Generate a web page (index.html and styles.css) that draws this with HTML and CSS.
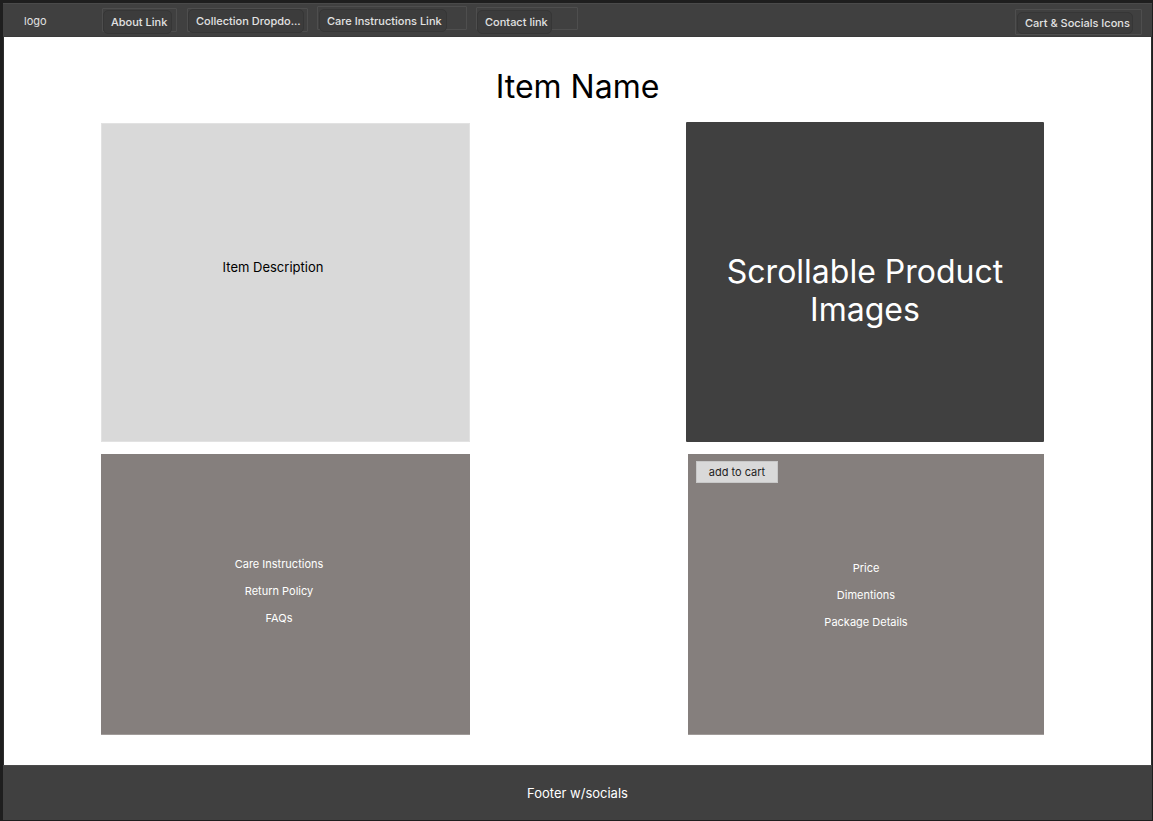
FILE: index.html
```html
<!DOCTYPE html>
<html lang="en">
<head>
<meta charset="utf-8">
<title>Item Page</title>
<link rel="stylesheet" href="styles.css">
</head>
<body>
<div class="frame">
  <header class="nav">
    <span class="logo">logo</span>
    <div class="slot slot-about"><span class="btn">About Link</span></div>
    <div class="slot slot-coll"><span class="btn">Collection Dropdo...</span></div>
    <div class="slot slot-care"><span class="btn">Care Instructions Link</span></div>
    <div class="slot slot-contact"><span class="btn">Contact link</span></div>
    <div class="slot slot-cart"><span class="btn">Cart &amp; Socials Icons</span></div>
  </header>
  <main class="main">
    <h1 class="title">Item Name</h1>
    <div class="grid">
      <section class="box box-desc">Item Description</section>
      <section class="box box-images">Scrollable Product Images</section>
      <section class="box box-info">
        <ul class="lines">
          <li>Care Instructions</li>
          <li>Return Policy</li>
          <li>FAQs</li>
        </ul>
      </section>
      <section class="box box-buy">
        <button class="cart-btn" type="button">add to cart</button>
        <ul class="lines">
          <li>Price</li>
          <li>Dimentions</li>
          <li>Package Details</li>
        </ul>
      </section>
    </div>
  </main>
  <footer class="footer">Footer w/socials</footer>
</div>
</body>
</html>
```
FILE: styles.css
```css
* { box-sizing: border-box; }
html, body { margin: 0; padding: 0; }
body {
  background: #1e1e1e;
  width: 1153px;
  height: 821px;
  overflow: hidden;
  font-family: "Inter", "Liberation Sans", sans-serif;
}
.frame {
  margin: 3px 1px 0 3px;
  width: 1149px;
  display: flex;
  flex-direction: column;
}
.nav {
  height: 34px;
  background: #404040;
  border-top: 1px solid #4a4a4a;
  border-bottom: 1px solid #3a3a3a;
  display: flex;
  align-items: flex-start;
  padding-left: 21px;
  padding-right: 19px;
  color: #e2e2e2;
  font-size: 11px;
  font-weight: 500;
}
.logo {
  margin-top: 10px;
  line-height: 14px;
  font-weight: 400;
  width: 23px;
}
.slot {
  position: relative;
}
.slot::before {
  content: "";
  position: absolute;
  border: 1px solid #4e4e4e;
  border-radius: 1px;
  pointer-events: none;
}
.btn {
  display: flex;
  align-items: center;
  height: 24px;
  padding-left: 7px;
  background: #3c3c3c;
  border: 1px solid #363636;
  border-radius: 5px;
  white-space: nowrap;
  position: relative;
  z-index: 1;
}
.slot-about { margin-left: 56px; margin-top: 6px; }
.slot-about .btn { width: 69px; }
.slot-about::before { left: -1px; top: -2px; right: -5px; bottom: 2px; }
.slot-coll { margin-left: 16px; margin-top: 5px; }
.slot-coll .btn { width: 116px; }
.slot-coll::before { left: -1px; top: -1px; right: -4px; bottom: 1px; }
.slot-care { margin-left: 15px; margin-top: 5px; }
.slot-care .btn { width: 128px; height: 23px; }
.slot-care::before { left: -2px; top: -3px; right: -20px; bottom: 2px; }
.slot-contact { margin-left: 30px; margin-top: 6px; }
.slot-contact .btn { width: 75px; }
.slot-contact::before { left: -1px; top: -3px; right: -26px; bottom: 4px; }
.slot-cart { margin-left: auto; margin-top: 8px; }
.slot-cart .btn { width: 116px; height: 22px; }
.slot-cart::before { left: -2px; top: -3px; right: -9px; bottom: -1px; }

.main {
  background: #ffffff;
  height: 728px;
  border-left: 1px solid #2e2e2e;
  border-right: 1px solid #2e2e2e;
  padding-top: 30px;
  padding-left: 97px;
}
.title {
  margin: 0 0 16px -97px;
  text-align: center;
  font-size: 32px;
  font-weight: 400;
  line-height: 40px;
  color: #000;
}
.grid {
  display: grid;
  grid-template-columns: 369px 358px;
  grid-template-rows: 319px 281px;
  column-gap: 216px;
  row-gap: 12px;
}
.box {
  display: flex;
  align-items: center;
  justify-content: center;
  text-align: center;
}
.box-desc {
  background: #d9d9d9;
  border: 1px solid #e2e2e2;
  font-size: 13px;
  color: #000;
  padding-right: 25px;
  padding-bottom: 31px;
}
.box-images {
  background: #404040;
  color: #ffffff;
  font-size: 32px;
  line-height: 38px;
  margin-top: -1px;
  padding: 18px 40px 0;
  border-radius: 1px;
}
.box-info, .box-buy {
  background: #857f7d;
  border-bottom: 1px solid #a09b99;
  color: #ffffff;
  font-size: 11px;
}
.box-info { padding-right: 13px; padding-bottom: 5px; }
.box-buy { position: relative; margin-left: 2px; padding-top: 2px; }
.lines {
  list-style: none;
  margin: 0;
  padding: 0;
}
.lines li { line-height: 27px; }
.cart-btn {
  position: absolute;
  left: 8px;
  top: 7px;
  width: 82px;
  height: 22px;
  margin: 0;
  padding: 0;
  background: #d9d9d9;
  border: 1px solid #c8c8c8;
  color: #222;
  font-family: "Inter", "Liberation Sans", sans-serif;
  font-size: 11px;
  text-align: center;
}
.footer {
  height: 55px;
  background: #404040;
  color: #ffffff;
  font-size: 13px;
  display: flex;
  align-items: center;
  justify-content: center;
  border-top: 1px solid #4a4a4a;
}
```
